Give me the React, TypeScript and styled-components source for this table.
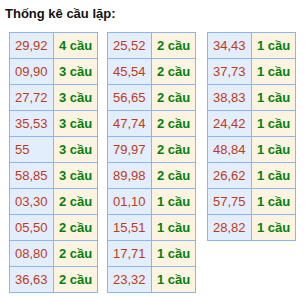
import React from "react";
import styled, { createGlobalStyle } from "styled-components";

type Cau = { pair: string; count: number };

const columns: Cau[][] = [
    [
        { pair: "29,92", count: 4 },
        { pair: "09,90", count: 3 },
        { pair: "27,72", count: 3 },
        { pair: "35,53", count: 3 },
        { pair: "55", count: 3 },
        { pair: "58,85", count: 3 },
        { pair: "03,30", count: 2 },
        { pair: "05,50", count: 2 },
        { pair: "08,80", count: 2 },
        { pair: "36,63", count: 2 },
    ],
    [
        { pair: "25,52", count: 2 },
        { pair: "45,54", count: 2 },
        { pair: "56,65", count: 2 },
        { pair: "47,74", count: 2 },
        { pair: "79,97", count: 2 },
        { pair: "89,98", count: 2 },
        { pair: "01,10", count: 1 },
        { pair: "15,51", count: 1 },
        { pair: "17,71", count: 1 },
        { pair: "23,32", count: 1 },
    ],
    [
        { pair: "34,43", count: 1 },
        { pair: "37,73", count: 1 },
        { pair: "38,83", count: 1 },
        { pair: "24,42", count: 1 },
        { pair: "48,84", count: 1 },
        { pair: "26,62", count: 1 },
        { pair: "57,75", count: 1 },
        { pair: "28,82", count: 1 },
    ],
];

const GlobalStyle = createGlobalStyle`
    body {
        margin: 0;
        background: #ffffff;
        font-family: "Liberation Sans", Arial, sans-serif;
    }
`;

export default function App() {
    return (
        <>
            <GlobalStyle />
            <Page>
                <Title>Thống kê cầu lặp:</Title>
                <Columns>
                    {columns.map((col, i) => (
                        <CauTable key={i}>
                            {col.map((item) => (
                                <React.Fragment key={item.pair}>
                                    <PairCell>{item.pair}</PairCell>
                                    <CountCell>{item.count} cầu</CountCell>
                                </React.Fragment>
                            ))}
                        </CauTable>
                    ))}
                </Columns>
            </Page>
        </>
    );
}

const Page = styled.div`
    padding: 6px 0 0 5px;
`;

const Title = styled.div`
    font-size: 13px;
    font-weight: bold;
    line-height: 16px;
    color: #111111;
`;

const Columns = styled.div`
    display: grid;
    grid-template-columns: 98px 100px 89px;
    align-items: start;
    margin: 10px 0 0 4px;
`;

const CauTable = styled.div`
    display: grid;
    grid-template-columns: 43px 43px;
    grid-auto-rows: 25px;
    gap: 1px;
    padding: 1px;
    width: 89px;
    box-sizing: border-box;
    background: #8fb4f2;
`;

const Cell = styled.div`
    font-size: 13px;
    line-height: 25px;
    padding-left: 5px;
    white-space: nowrap;
`;

const PairCell = styled(Cell)`
    background: #e3eefd;
    color: #bf3a1c;
`;

const CountCell = styled(Cell)`
    background: #fdf3e1;
    color: #05800a;
    font-weight: bold;
`;
